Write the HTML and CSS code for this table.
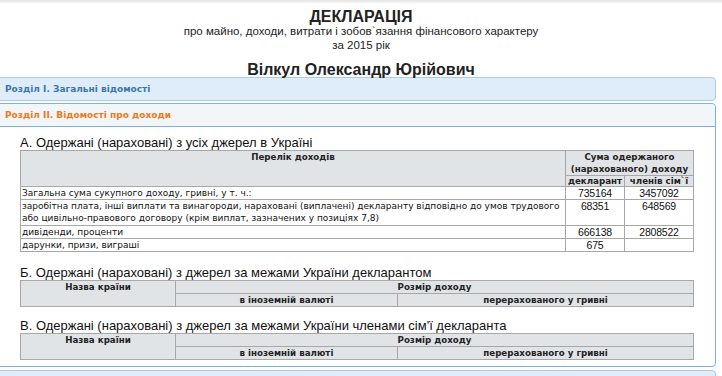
FILE: index.html
```html
<!DOCTYPE html>
<html lang="uk">
<head>
<meta charset="utf-8">
<link rel="stylesheet" href="styles.css">
</head>
<body>
<div class="topbar"></div>
<div class="title">
  <div class="t1">ДЕКЛАРАЦІЯ</div>
  <div class="t2">про майно, доходи, витрати і зобов`язання фінансового характеру</div>
  <div class="t2">за 2015 рік</div>
  <div class="name">Вілкул Олександр Юрійович</div>
</div>
<div class="panel p1"><div class="ph">Розділ I. Загальні відомості</div></div>
<div class="panel p2">
  <div class="ph orange">Розділ II. Відомості про доходи</div>
  <div class="pbody">
    <h3>А. Одержані (нараховані) з усіх джерел в Україні</h3>
    <table class="t tA">
      <colgroup><col class="c1"><col class="c2"><col class="c3"></colgroup>
      <tr class="h1"><th rowspan="2">Перелік доходів</th><th colspan="2">Сума одержаного (нарахованого) доходу</th></tr>
      <tr class="h2"><th>декларант</th><th>членів сім`ї</th></tr>
      <tr><td>Загальна сума сукупного доходу, гривні, у т. ч.:</td><td class="n">735164</td><td class="n">3457092</td></tr>
      <tr class="tall"><td>заробітна плата, інші виплати та винагороди, нараховані (виплачені) декларанту відповідно до умов трудового або цивільно-правового договору (крім виплат, зазначених у позиціях 7,8)</td><td class="n">68351</td><td class="n">648569</td></tr>
      <tr><td>дивіденди, проценти</td><td class="n">666138</td><td class="n">2808522</td></tr>
      <tr><td>дарунки, призи, виграші</td><td class="n">675</td><td class="n"></td></tr>
    </table>
    <h3>Б. Одержані (нараховані) з джерел за межами України декларантом</h3>
    <table class="t tB">
      <colgroup><col class="b1"><col class="b2"><col class="b3"></colgroup>
      <tr><th rowspan="2">Назва країни</th><th colspan="2">Розмір доходу</th></tr>
      <tr><th>в іноземній валюті</th><th>перерахованого у гривні</th></tr>
    </table>
    <h3>В. Одержані (нараховані) з джерел за межами України членами сім'ї декларанта</h3>
    <table class="t tB">
      <colgroup><col class="b1"><col class="b2"><col class="b3"></colgroup>
      <tr><th rowspan="2">Назва країни</th><th colspan="2">Розмір доходу</th></tr>
      <tr><th>в іноземній валюті</th><th>перерахованого у гривні</th></tr>
    </table>
  </div>
</div>
<div class="panel p3"></div>
</body>
</html>
```
FILE: styles.css
```css
html, body { margin: 0; padding: 0; background: #fff; }
body { font-family: "Liberation Sans", Arial, sans-serif; color: #222; width: 722px; height: 376px; overflow: hidden; }
.topbar { height: 3px; background: linear-gradient(#e4e4e4, #f6f6f6); }
.title { text-align: center; padding-top: 7px; }
.t1 { font-size: 16px; font-weight: bold; line-height: 14px; }
.t2 { font-size: 11.5px; line-height: 14px; }
.name { font-size: 16px; font-weight: bold; line-height: 15px; margin-top: 10px; }
.panel { margin-left: -1px; width: 717px; border: 1px solid #a9cdef; border-radius: 0 4px 4px 0; box-sizing: border-box; }
.p1 { background: #dfedfa; margin-bottom: 2px; }
.ph { height: 22px; line-height: 22px; padding-left: 5px; font-family: "DejaVu Sans", Verdana, sans-serif; font-size: 9px; font-weight: bold; color: #3f76a8; }
.p2 { border-color: #79b2e6; }
.p2 .ph { background: #f3f6f8; border-bottom: 1px solid #79b2e6; border-radius: 0 4px 0 0; }
.orange { color: #ea7a20; }
.pbody { padding: 9px 0 6px 20px; }
h3 { margin: 0; font-weight: normal; font-size: 13px; line-height: 14px; color: #111; }
.t { border-collapse: collapse; width: 673px; table-layout: fixed; font-family: "DejaVu Sans", Verdana, sans-serif; font-size: 9px; color: #111; }
.t td, .t th { border: 1px solid #a8a8a8; padding: 0 1px; line-height: 12px; height: 12px; vertical-align: top; box-sizing: border-box; }
.t th { background: #e1e4e7; font-weight: bold; text-align: center; color: #222; font-size: 8.7px; }
.t td { text-align: left; }
.t td.n { text-align: center; font-size: 10.5px; font-family: "Liberation Sans", Arial, sans-serif; letter-spacing: -0.2px; }
.t .h2 th { line-height: 10px; height: 10px; }
.t .tall td { height: 26px; }
.tA .c1 { width: 545px; } .tA .c2 { width: 59px; } .tA .c3 { width: 69px; }
.tA { margin-bottom: 14px; }
.tB .b1 { width: 155px; } .tB .b2 { width: 222px; } .tB .b3 { width: 296px; }
.tB { margin-bottom: 12px; }
.tB:last-child { margin-bottom: 0; }
.p3 { margin-top: 3px; height: 12px; background: #dfedfa; border-radius: 0 4px 0 0; }
```
